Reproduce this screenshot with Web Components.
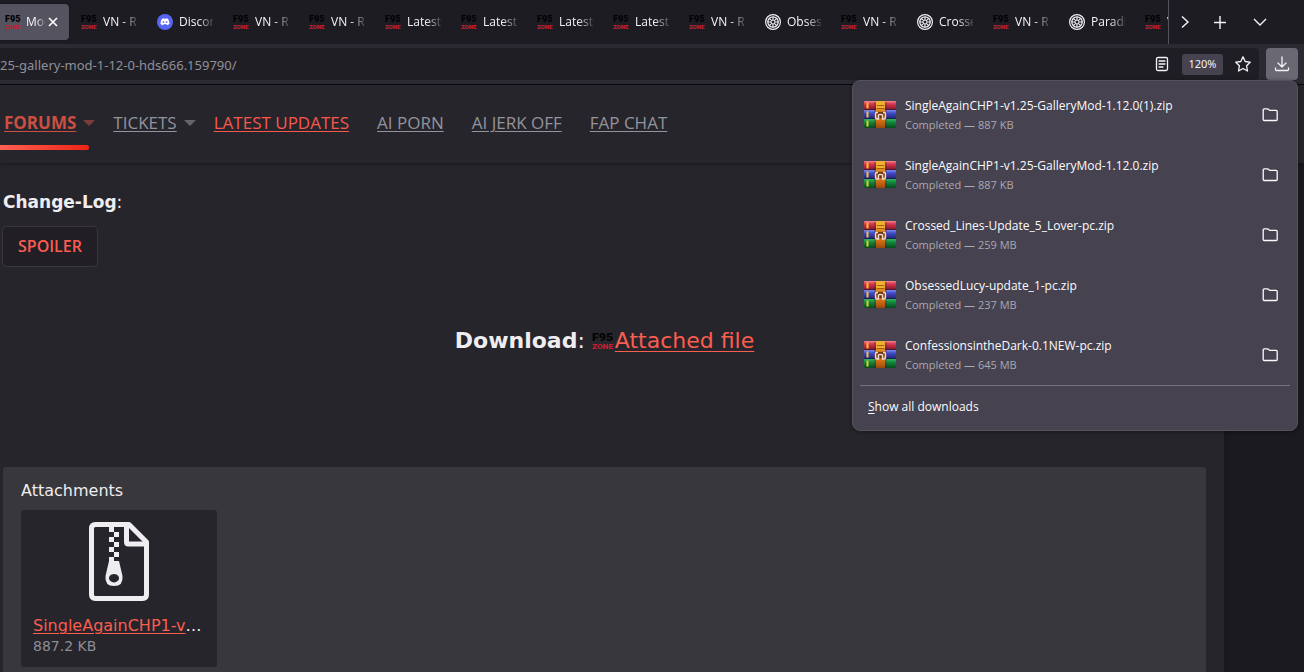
<!DOCTYPE html>
<html lang="en">
<head>
<meta charset="utf-8">
<meta name="viewport" content="width=device-width, initial-scale=1">
<title>Downloads</title>
<style>
  html, body { height: 100%; }
  body { margin: 0; overflow: hidden; background: #1b1a20; }
</style>
</head>
<body>
<app-window></app-window>
<script>
const define = (name, html, setup) => {
  const template = document.createElement('template');
  template.innerHTML = html;
  customElements.define(name, class extends HTMLElement {
    constructor() {
      super();
      this.attachShadow({ mode: 'open' }).append(template.content.cloneNode(true));
    }
    connectedCallback() { if (setup) setup(this, this.shadowRoot); }
  });
};

define('site-logo', `
  <style>
    :host { display: inline-block; width: 16px; height: 16px; flex: none; }
    :host([large]) { width: 22px; height: 19px; }
    svg { display: block; width: 100%; height: 100%; overflow: visible; }
    text { font-family: Roboto, sans-serif; font-weight: 900; }
  </style>
  <svg viewBox="0 0 16 16" preserveAspectRatio="none" aria-hidden="true">
    <text x="0" y="8" font-size="9" fill="#030304">F95</text>
    <text x="0" y="15" font-size="6" fill="#c3202f">ZONE</text>
  </svg>`);

define('discord-logo', `
  <style>:host { display: block; width: 16px; height: 16px; flex: none; } svg { display: block; }</style>
  <svg width="16" height="16" viewBox="0 0 16 16" aria-hidden="true">
    <circle cx="8" cy="8" r="8" fill="#5865f2"/>
    <path d="M5.1 4.8 6.7 4.3 7 4.8h2l.3-.5 1.6.5c1.1 1.6 1.7 3.3 1.5 5.2-.8.7-1.6 1-2.3 1.2l-.6-.9H6.5l-.6.9c-.8-.2-1.6-.5-2.3-1.2-.2-1.9.4-3.6 1.5-5.2z" fill="#fff"/>
    <circle cx="6.4" cy="8.1" r=".9" fill="#5865f2"/><circle cx="9.6" cy="8.1" r=".9" fill="#5865f2"/>
  </svg>`);

define('wheel-logo', `
  <style>:host { display: block; width: 16px; height: 16px; flex: none; } svg { display: block; }</style>
  <svg width="16" height="16" viewBox="0 0 16 16" fill="none" stroke="#f0f0f4" aria-hidden="true">
    <circle cx="8" cy="8" r="7.4" stroke-width="1.2"/>
    <circle cx="8" cy="8" r="5.2" stroke-width="1.3"/>
    <path d="M8 2.8v3.4M8 9.8v3.4M2.8 8h3.4M9.8 8h3.4M4.3 4.3l2.4 2.4M9.3 9.3l2.4 2.4M11.7 4.3 9.3 6.7M6.7 9.3l-2.4 2.4" stroke-width="1.1"/>
    <circle cx="8" cy="8" r="2" stroke-width="1"/>
  </svg>`);

define('archive-icon', `
  <style>:host { display: block; width: 32px; height: 28px; flex: none; } svg { display: block; }</style>
  <svg width="32" height="28" viewBox="0 0 32 28" aria-hidden="true">
    <defs>
      <linearGradient id="r" x2="0" y2="1"><stop offset="0" stop-color="#f08a98"/><stop offset=".3" stop-color="#dc3a50"/><stop offset="1" stop-color="#7d1428"/></linearGradient>
      <linearGradient id="b" x2="0" y2="1"><stop offset="0" stop-color="#7f8cf0"/><stop offset=".35" stop-color="#4149c8"/><stop offset="1" stop-color="#20246e"/></linearGradient>
      <linearGradient id="g" x2="0" y2="1"><stop offset="0" stop-color="#35b565"/><stop offset=".35" stop-color="#128a3c"/><stop offset="1" stop-color="#064a1d"/></linearGradient>
      <linearGradient id="o" x2="0" y2="1"><stop offset="0" stop-color="#f0b52c"/><stop offset=".35" stop-color="#dc8a20"/><stop offset=".5" stop-color="#8a3c0c"/><stop offset=".7" stop-color="#d87418"/><stop offset="1" stop-color="#9c4808"/></linearGradient>
    </defs>
    <rect y="1" width="32" height="9" rx="1" fill="url(#r)"/>
    <rect y="10" width="32" height="9" rx="1" fill="url(#b)"/>
    <rect y="19" width="32" height="9" rx="1" fill="url(#g)"/>
    <path d="M1 9.5h30M1 18.5h30" stroke="#1b1530" stroke-opacity=".6"/>
    <path d="M3.5 2.5v6M3.5 11.5v6M3.5 20.5v6" stroke="#f5c525" stroke-width="2"/>
    <path d="M11 2v26M22 2v26" stroke="#3a1530" stroke-opacity=".5"/>
    <rect x="12" y="1" width="9" height="27" rx="1" fill="url(#o)"/>
    <path d="M12.5 5q0-4 4-4t4 4v3h-8z" fill="#f0b030"/>
    <path d="M13 5.5h7M13 8.5h7" stroke="#a35c10"/>
    <rect x="14" y="12" width="5" height="6" fill="#6d300c"/>
    <path d="M14 12.5h-1.5q-1 0-1 1v4q0 1.5 1.5 1.5h1.5v-3.5q0-1 1-1h2q1 0 1 1V19H20q1.5 0 1.5-1.5v-4q0-1-1-1H19" fill="none" stroke="#e8dcd2" stroke-width="1.4"/>
  </svg>`);

define('browser-tab', `
  <style>
    :host { display: flex; align-items: center; gap: 6px; box-sizing: border-box; flex: none; width: 76px; height: 36px; padding: 0 15px 0 5px;
      color: #f4f4f8; font: 12px/20px "Open Sans", sans-serif; }
    .label { flex: 1; min-width: 0; overflow: hidden; white-space: nowrap; mask-image: linear-gradient(to right, #000 55%, #0000 110%); }
    ::slotted(*), .label, button { position: relative; }
    button { display: none; border: 0; padding: 0; width: 16px; height: 16px; background: none; color: #fff; }
    :host([active]) { position: relative; gap: 5px; }
    :host([active])::before { content: ""; position: absolute; inset: 0 7px 0 -6px; background: #55535f; border-radius: 4px; box-shadow: 0 0 2px #0008; }
    :host([active]) button { display: block; }
    :host([active]) .label { margin-right: -5px; }
    svg { display: block; }
  </style>
  <slot name="icon"></slot>
  <span class="label"><slot></slot></span>
  <button aria-label="Close tab"><svg width="16" height="16" viewBox="0 0 16 16" stroke="currentColor" stroke-width="1.6"><path d="m4 4 8 8m0-8-8 8"/></svg></button>`);

define('tab-strip', `
  <style>
    :host { display: flex; height: 44px; background: #1e1c23; color: #f4f4f8; }
    .tabs { display: flex; flex: 1; min-width: 0; overflow: hidden; padding-top: 4px; border-right: 1px solid #55535e; }
    .tools { display: flex; align-items: center; gap: 4px; padding-right: 28px; }
    button { border: 0; padding: 0; width: 32px; height: 32px; display: grid; place-items: center; background: none; color: inherit; }
    button:first-child { width: 31px; }
    button:last-child { margin-left: 4px; }
    svg { fill: none; stroke: currentColor; stroke-width: 1.4; }
  </style>
  <div class="tabs"></div>
  <div class="tools">
    <button aria-label="Scroll tabs"><svg width="16" height="16"><path d="m5 2.5 6 5.500-6 5.500"/></svg></button>
    <button aria-label="New tab"><svg width="16" height="16"><path d="M8 2v13M2 8.500h12"/></svg></button>
    <button aria-label="List all tabs"><svg width="16" height="16"><path d="m2 5 6 6 6-6"/></svg></button>
  </div>`, (host, root) => {
    const tabs = [['site', 'Mods'], ['site', 'VN - Ren'], ['discord', 'Discord'], ['site', 'VN - Ren'], ['site', 'VN - Ren'],
      ['site', 'Latest'], ['site', 'Latest'], ['site', 'Latest'], ['site', 'Latest'], ['site', 'VN - Ren'], ['wheel', 'Obsessed'],
      ['site', 'VN - Ren'], ['wheel', 'Crossed'], ['site', 'VN - Ren'], ['wheel', 'Paradise'], ['site', 'VN - Ren']];
    root.querySelector('.tabs').innerHTML = tabs.map(([icon, text], i) =>
      `<browser-tab${i ? '' : ' active'}><${icon}-logo slot="icon"></${icon}-logo>${text}</browser-tab>`).join('');
  });

define('address-bar', `
  <style>
    :host { display: flex; gap: 7px; box-sizing: border-box; height: 41px; padding: 4px 6px 4px 0; background: #2b2a33; border-bottom: 1px solid #09090c; color: #f4f4f8; }
    .field { flex: 1; display: flex; align-items: center; background: #201e25; border-radius: 0 4px 4px 0; }
    input { flex: 1; min-width: 0; border: 0; padding: 2px 0 0; background: none; color: #918f99; font: 13px/20px "Noto Sans", sans-serif; height: 32px; box-sizing: border-box; }
    button { border: 0; padding: 0; width: 32px; height: 32px; display: grid; place-items: center; background: none; color: inherit; }
    .zoom { width: 41px; height: 21px; background: #46424f; border-radius: 3px; font: 11px/20px "Noto Sans", sans-serif; margin: 0 4px; }
    .downloads { background: #6a6872; border-radius: 4px; }
    svg { fill: none; stroke: currentColor; stroke-width: 1.3; stroke-linejoin: round; stroke-linecap: round; }
  </style>
  <div class="field">
    <input aria-label="Address" value="25-gallery-mod-1-12-0-hds666.159790/">
    <button aria-label="Reader view"><svg width="16" height="16"><rect x="2.500" y="1.500" width="11" height="13" rx="1.500"/><path d="M5 5h6M5 8h6M5 11h4"/></svg></button>
    <button class="zoom">120%</button>
    <button aria-label="Bookmark this page"><svg width="16" height="16"><path d="m8 .8 2.200 4.700 5 .7-3.600 3.600.9 5.200L8 12.500 3.500 15l.9-5.200L.8 6.200l5-.7z"/></svg></button>
  </div>
  <button class="downloads" aria-label="Downloads"><svg width="16" height="16"><path d="M8 1v9.500M4 7l4 4 4-4M1.500 12v1.500q0 1 1 1h11q1 0 1-1V12"/></svg></button>`);

define('nav-item', `
  <style>
    :host { display: flex; align-items: center; gap: 7px; position: relative; color: #93939b; padding-right: 10px; }
    :host([menu]) { padding-right: 0; }
    a { color: inherit; text-decoration: underline; text-underline-offset: 2px; text-decoration-thickness: 1px; white-space: nowrap; }
    i { display: none; border: 6px solid transparent; border-top-color: #65656c; border-bottom: 0; }
    :host([menu]) i { display: block; }
    :host([hot]) { color: #f8584b; }
    :host([current]) { color: #cb4f43; font-weight: 700; }
    :host([current]) i { border-top-color: #7b3d39; }
    :host([current])::after { content: ""; position: absolute; left: -4px; right: 6px; top: 34px; height: 5px; border-radius: 0 3px 3px 0; background: linear-gradient(90deg, #ff6052, #ee2415); }
  </style>
  <a href="#"><slot></slot></a><i></i>`);

define('site-nav', `
  <style>
    :host { display: flex; align-items: center; gap: 18px; box-sizing: border-box; height: 78px; padding: 0 4px 2px; background: #26252b; box-shadow: 0 1px 3px #0006; position: relative; font: 17px/24px "Open Sans", sans-serif; }
  </style>
  <nav-item menu current>FORUMS</nav-item><nav-item menu>TICKETS</nav-item><nav-item hot>LATEST UPDATES</nav-item>
  <nav-item>AI PORN</nav-item><nav-item>AI JERK OFF</nav-item><nav-item>FAP CHAT</nav-item>`);

define('attachment-card', `
  <style>
    :host { display: block; box-sizing: border-box; width: 196px; padding: 12px 12px 13px; background: #26252b; border-radius: 3px; }
    svg { display: block; margin: 0 auto 13px; }
    .name { line-height: 24px; font-size: 16px; color: #f0edf0; overflow: hidden; text-overflow: ellipsis; white-space: nowrap; }
    a { color: #fb5d4f; text-underline-offset: 2px; text-decoration-thickness: 1px; }
    .size { color: #8e8d95; font-size: 14px; line-height: 16px; }
  </style>
  <svg width="60" height="79" viewBox="0 0 60 79" fill="none" stroke="#f0edf0" stroke-width="5" stroke-linejoin="round" aria-hidden="true">
    <path d="M6.500 2.500H40L57.500 20v52.500q0 4-4 4h-47q-4 0-4-4v-66q0-4 4-4z"/>
    <path d="M37.500 3v17q0 2 2 2H57"/>
    <path d="M20 5h5v5h-5zM25 10h5v5h-5zM20 15h5v5h-5zM25 20h5v5h-5zM20 25h5v5h-5zM25 30h5v5h-5zM20 35h5v5h-5z" fill="#f0edf0" stroke="none"/>
    <path fill-rule="evenodd" d="M20 39h10l3.500 15q1 10-8.500 10t-8.500-10zM25 52a5 4.200 0 1 0 .01 0z" fill="#f0edf0" stroke="none"/>
  </svg>
  <div class="name"><a href="#"><slot></slot></a></div>
  <div class="size"><slot name="size"></slot></div>`);

define('thread-post', `
  <style>
    :host { display: flex; flex-direction: column; box-sizing: border-box; flex: 1; margin-right: 80px; padding: 27px 18px 0 3px; background: #26252b; color: #f0edf0; font: 17px/24px "DejaVu Sans", sans-serif; box-shadow: 0 0 8px #0003; }
    p { margin: 0; }
    .spoiler { align-self: flex-start; margin: 12px 0 59px -1px; height: 41px; padding: 0 15px 2px; border: 1px solid #37363c; border-radius: 4px; background: #211f25; color: #fb5d4f; font: 600 16px/24px "Open Sans", sans-serif; }
    .download { text-align: center; font-size: 22px; line-height: 30px; }
    .download site-logo { vertical-align: -2px; margin-right: 1px; }
    a { color: #fb5d4f; text-underline-offset: 3px; text-decoration-thickness: 1px; }
    section { flex: 1; margin-top: 111px; padding: 12px 18px; background: #38373b; border-radius: 3px; }
    h2 { margin: 0 0 7px; font-size: 16px; line-height: 24px; font-weight: 400; }
  </style>
  <p><b>Change-Log</b>:</p>
  <button class="spoiler">SPOILER</button>
  <p class="download"><b>Download</b>: <site-logo large></site-logo><a href="#">Attached file</a></p>
  <section><h2>Attachments</h2>
    <attachment-card>SingleAgainCHP1-v1.25-GalleryMod-1.12.0.zip<span slot="size">887.2 KB</span></attachment-card>
  </section>`);

define('download-item', `
  <style>
    :host { display: flex; align-items: center; gap: 9px; height: 60px; padding: 0 11px; }
    .text { flex: 1; min-width: 0; padding-top: 1px; }
    .name { font-size: 12px; line-height: 20px; white-space: nowrap; }
    .state { font-size: 11px; line-height: 18px; color: #aaa8b1; }
    button { border: 0; padding: 0; width: 32px; height: 32px; display: grid; place-items: center; background: none; color: inherit; }
  </style>
  <archive-icon></archive-icon>
  <div class="text"><div class="name"><slot></slot></div><div class="state"><slot name="state"></slot></div></div>
  <button aria-label="Show in folder"><svg width="16" height="16" fill="none" stroke="currentColor" stroke-width="1.3" stroke-linejoin="round"><path d="M1.200 13.500V3.800q0-1 1-1h3.200q.6 0 1 .4l1.200 1.200h6.600q1 0 1 1v8.100q0 1-1 1h-12q-1 0-1-1z"/></svg></button>`);

define('downloads-panel', `
  <style>
    :host { display: block; box-sizing: border-box; width: 446px; padding: 3px 0 0; background: #46424f; border: 1px solid #55525f; border-radius: 8px; color: #fbfbfe; box-shadow: 0 1px 4px #0006; font: 12px/20px "Open Sans", sans-serif; }
    hr { margin: 1px 7px 0; border: 0; border-top: 1px solid #75727e; }
    button { display: block; width: 100%; height: 44px; padding: 0 15px 2px; border: 0; background: none; color: inherit; font: inherit; text-align: left; }
    u { text-underline-offset: 2px; }
  </style>
  <download-item>SingleAgainCHP1-v1.25-GalleryMod-1.12.0(1).zip<span slot="state">Completed — 887 KB</span></download-item>
  <download-item>SingleAgainCHP1-v1.25-GalleryMod-1.12.0.zip<span slot="state">Completed — 887 KB</span></download-item>
  <download-item>Crossed_Lines-Update_5_Lover-pc.zip<span slot="state">Completed — 259 MB</span></download-item>
  <download-item>ObsessedLucy-update_1-pc.zip<span slot="state">Completed — 237 MB</span></download-item>
  <download-item>ConfessionsintheDark-0.1NEW-pc.zip<span slot="state">Completed — 645 MB</span></download-item>
  <hr>
  <button><u>S</u>how all downloads</button>`);

define('app-window', `
  <style>
    :host { display: flex; flex-direction: column; min-height: 100%; position: relative; }
    downloads-panel { position: absolute; top: 80px; right: 6px; }
  </style>
  <tab-strip></tab-strip><address-bar></address-bar><site-nav></site-nav><thread-post></thread-post>
  <downloads-panel></downloads-panel>`);
</script>
</body>
</html>
